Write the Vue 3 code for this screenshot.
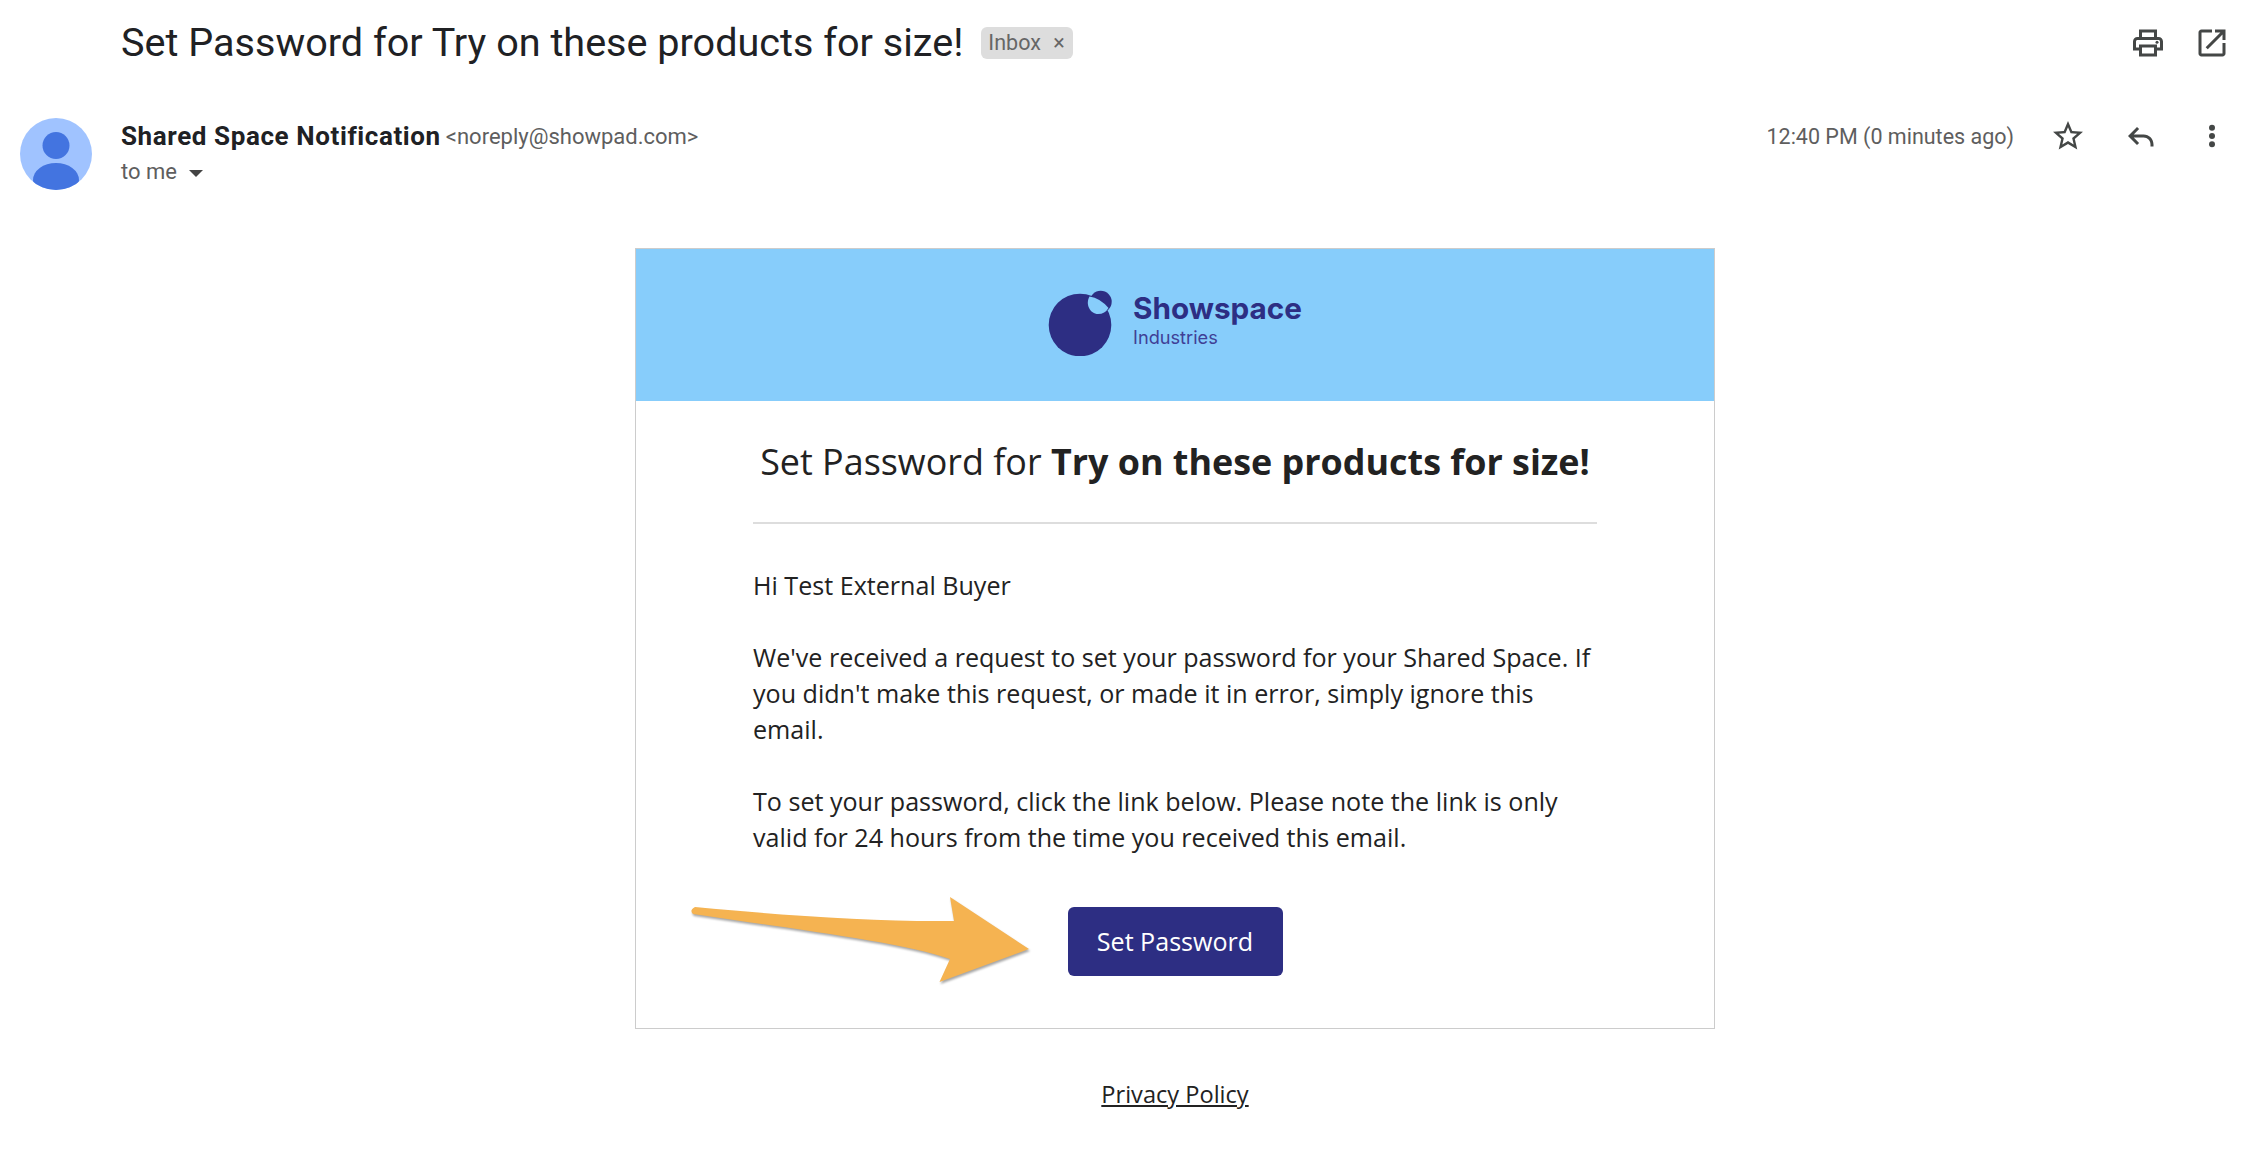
<template>
  <div class="page">
    <!-- subject row -->
    <div class="subject-row">
      <h2 class="subject">{{ subject }}</h2>
      <span class="chip">Inbox <span class="chip-x">×</span></span>
      <div class="subject-actions">
        <svg class="icon" viewBox="0 0 24 24"><path d="M19 8h-1V3H6v5H5c-1.66 0-3 1.34-3 3v6h4v4h12v-4h4v-6c0-1.66-1.34-3-3-3zM8 5h8v3H8V5zm8 14H8v-4h8v4zm2-4v-2H6v2H4v-4c0-.55.45-1 1-1h14c.55 0 1 .45 1 1v4h-2z"/><circle cx="18" cy="11.5" r="1"/></svg>
        <svg class="icon" viewBox="0 0 24 24"><path d="M19 19H5V5h7V3H5c-1.11 0-2 .9-2 2v14c0 1.1.89 2 2 2h14c1.1 0 2-.9 2-2v-7h-2v7zM14 3v2h3.59l-9.83 9.83 1.41 1.41L19 6.41V10h2V3h-7z"/></svg>
      </div>
    </div>

    <!-- sender row -->
    <div class="meta-row">
      <svg class="avatar" viewBox="0 0 72 72">
        <defs><clipPath id="avatar-clip"><circle cx="36" cy="36" r="36"/></clipPath></defs>
        <circle cx="36" cy="36" r="36" fill="#a0c3ff"/>
        <g clip-path="url(#avatar-clip)" fill="#4374e0">
          <circle cx="36" cy="27.5" r="13.5"/>
          <ellipse cx="36" cy="62" rx="23" ry="17"/>
        </g>
      </svg>
      <div class="sender">
        <div class="sender-line"><span class="name">Shared Space Notification</span> <span class="address">&lt;noreply@showpad.com&gt;</span></div>
        <div class="to-line">to me <span class="caret"></span></div>
      </div>
      <div class="meta-right">
        <span class="time">12:40 PM (0 minutes ago)</span>
        <svg class="icon" viewBox="0 0 24 24"><path d="M22 9.24l-7.19-.62L12 2 9.19 8.63 2 9.24l5.46 4.73L5.82 21 12 17.27 18.18 21l-1.63-7.03L22 9.24zM12 15.4l-3.76 2.27 1-4.28-3.32-2.88 4.38-.38L12 6.1l1.71 4.04 4.38.38-3.32 2.88 1 4.28L12 15.4z"/></svg>
        <svg class="icon" viewBox="0 0 24 24"><path d="M21 19h-2v-1.4c0-2.6-2-4.6-4.6-4.6H7.83l3.58 3.59L10 18l-6-6 6-6 1.41 1.41L7.83 11h6.57c3.7 0 6.6 2.9 6.6 6.6V19z"/></svg>
        <svg class="icon" viewBox="0 0 24 24"><circle cx="12" cy="6.5" r="2"/><circle cx="12" cy="12" r="2"/><circle cx="12" cy="17.5" r="2"/></svg>
      </div>
    </div>

    <!-- email content -->
    <div class="mail">
      <div class="card">
        <div class="banner">
          <svg class="logo" viewBox="0 0 66 68">
            <circle cx="32" cy="37" r="31.3" fill="#2d2e83"/>
            <circle cx="52.7" cy="13.7" r="11" fill="#2d2e83"/>
            <path d="M41.5 8.5Q52 10 60.5 20Q57 26 50 26C42 26 37 16 41.5 8.5Z" fill="#87cdfb"/>
          </svg>
          <div class="brand">
            <div class="brand-name">Showspace</div>
            <div class="brand-sub">Industries</div>
          </div>
        </div>
        <div class="card-body">
          <h1 class="title">Set Password for <b>Try on these products for size!</b></h1>
          <hr class="rule" />
          <p>Hi Test External Buyer</p>
          <p>We've received a request to set your password for your Shared Space. If you didn't make this request, or made it in error, simply ignore this email.</p>
          <p>To set your password, click the link below. Please note the link is only valid for 24 hours from the time you received this email.</p>
          <div class="button-row">
            <a class="button">Set Password</a>
            <!-- annotation arrow lies over the card -->
            <svg class="arrow" viewBox="685 890 350 100">
              <path d="M695 907C790 916 880 922 954 921L950 897L1029 949L939.5 982L950 959C900 942 800 930 693 914Q689 910 695 907Z" fill="#f5b351"/>
            </svg>
          </div>
        </div>
      </div>
      <a class="privacy">Privacy Policy</a>
    </div>
  </div>
</template>

<script setup>
const subject = "Set Password for Try on these products for size!";
</script>

<style scoped>
.page {
  width: 2264px;
  height: 1166px;
  overflow: hidden;
  background: #fff;
  font-family: Roboto, "Liberation Sans", sans-serif;
  color: #202124;
}

.subject-row {
  height: 85px;
  padding: 0 34px 0 121px;
  display: flex;
  align-items: center;
}
.subject {
  margin: 0;
  font-size: 39.6px;
  font-weight: 400;
  white-space: nowrap;
}
.chip {
  margin-left: 18px;
  width: 92px;
  height: 32px;
  box-sizing: border-box;
  padding-left: 7px;
  background: #ddd;
  border-radius: 6px;
  color: #666;
  font-size: 21.5px;
  line-height: 32px;
  white-space: nowrap;
}
.chip-x {
  margin-left: 7px;
}
.subject-actions {
  margin-left: auto;
  display: flex;
  gap: 28px;
}
.icon {
  width: 36px;
  height: 36px;
  fill: #444746;
  flex: none;
  display: block;
}

.meta-row {
  margin-top: 33px;
  height: 72px;
  padding: 0 34px 0 20px;
  display: flex;
}
.avatar {
  width: 72px;
  height: 72px;
  flex: none;
  margin-right: 29px;
}
.sender {
  padding-top: 1px;
}
.sender-line {
  height: 34px;
  line-height: 34px;
  white-space: nowrap;
}
.name {
  font-size: 26px;
  font-weight: 700;
  letter-spacing: 0.6px;
}
.address {
  margin-left: 1px;
  font-size: 22px;
  color: #5e5e5e;
  vertical-align: 1px;
}
.to-line {
  margin-top: 2px;
  font-size: 22px;
  line-height: 34px;
  color: #5e5e5e;
  display: flex;
  align-items: center;
}
.caret {
  margin: 2px 0 0 12px;
  border-top: 7px solid #444;
  border-left: 7px solid transparent;
  border-right: 7px solid transparent;
}
.meta-right {
  margin-left: auto;
  height: 36px;
  display: flex;
  align-items: center;
  gap: 36px;
}
.time {
  font-size: 21.5px;
  color: #5e5e5e;
  white-space: nowrap;
}

.mail {
  margin-top: 58px;
  padding: 0 35px 0 121px;
  display: flex;
  flex-direction: column;
  align-items: center;
  font-family: "Open Sans", "Liberation Sans", sans-serif;
  color: #222;
}
.card {
  width: 1080px;
  box-sizing: border-box;
  border: 1px solid #ccc;
}
.banner {
  height: 152px;
  background: #87cdfb;
  display: flex;
  align-items: center;
  justify-content: center;
  color: #2d2e83;
  font-family: Inter, Roboto, sans-serif;
}
.logo {
  width: 66px;
  height: 68px;
  margin: 0 19px 6px 0;
  flex: none;
}
.brand {
  margin-bottom: 11px;
}
.brand-name {
  font-size: 29.7px;
  font-weight: 700;
  line-height: 34px;
}
.brand-sub {
  font-size: 18.2px;
  line-height: 24px;
  color: #3f4096;
}
.card-body {
  padding: 0 117px 52px;
  font-size: 25.1px;
  line-height: 36px;
}
.title {
  margin: 0;
  height: 121px;
  line-height: 121px;
  text-align: center;
  font-size: 35.9px;
  font-weight: 400;
  white-space: nowrap;
}
.title b {
  font-weight: 700;
}
.rule {
  margin: 0 0 43px;
  border: 0;
  border-top: 2px solid #ddd;
}
p {
  margin: 0 0 36px;
}
.button-row {
  position: relative;
  margin-top: 52px;
  display: flex;
  justify-content: center;
}
.button {
  width: 215px;
  height: 69px;
  line-height: 69px;
  border-radius: 6px;
  background: #2d2e83;
  color: #fff;
  text-align: center;
}
.arrow {
  position: absolute;
  left: -68px;
  top: -17px;
  width: 350px;
  height: 100px;
  filter: drop-shadow(1px 2px 1px rgba(0, 0, 0, 0.35));
}
.privacy {
  margin-top: 47px;
  font-size: 23.6px;
  line-height: 36px;
  text-decoration: underline;
  color: #222;
}
</style>
